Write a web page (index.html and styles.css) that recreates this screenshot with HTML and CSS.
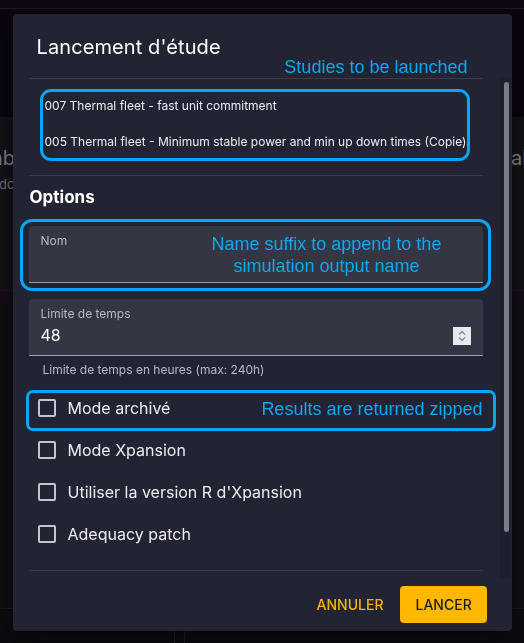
FILE: index.html
```html
<!DOCTYPE html>
<html lang="fr">
<head>
<meta charset="utf-8">
<title>Lancement d'étude</title>
<link rel="stylesheet" href="styles.css">
</head>
<body>
<div class="app">
  <div class="topbar"></div>
  <div class="hero"></div>
  <div class="card">
    <div class="card-left">
      <div class="card-title">nb</div>
      <div class="card-sub">dc</div>
    </div>
    <div class="card-right">
      <div class="card-title">ab</div>
    </div>
  </div>
  <div class="strip"></div>
  <div class="main"></div>
  <div class="footer">
    <div class="footer-cell"></div>
    <div class="footer-sep"></div>
    <div class="footer-cell"></div>
  </div>
</div>

<div class="overlay">
  <div class="dialog">
    <div class="dlg-title">
      <h2 class="title">Lancement d'étude</h2>
      <span class="note note-studies">Studies to be launched</span>
    </div>
    <div class="dlg-body">
      <div class="content">
        <hr class="divider">
        <ul class="study-list">
          <li>007 Thermal fleet - fast unit commitment</li>
          <li>005 Thermal fleet - Minimum stable power and min up down times (Copie)</li>
        </ul>
        <hr class="divider divider-gap">
        <h3 class="section">Options</h3>

        <div class="field field-name">
          <span class="field-label">Nom</span>
          <span class="name-frame"></span>
          <span class="note note-name">Name suffix to append to the<br>simulation output name</span>
        </div>

        <div class="field field-time">
          <span class="field-label">Limite de temps</span>
          <span class="field-value">48</span>
          <span class="spinner">
            <svg width="10" height="14" viewBox="0 0 10 14" aria-hidden="true">
              <path d="M2 5.5 L5 2.5 L8 5.5" fill="none" stroke="#8a8a92" stroke-width="1.3"/>
              <path d="M2 8.5 L5 11.5 L8 8.5" fill="none" stroke="#8a8a92" stroke-width="1.3"/>
            </svg>
          </span>
        </div>
        <p class="helper">Limite de temps en heures (max: 240h)</p>

        <div class="checks">
          <label class="check-row check-archive">
            <span class="box"></span>
            <span class="check-label">Mode archivé</span>
            <span class="archive-frame"></span>
            <span class="note note-zip">Results are returned zipped</span>
          </label>
          <label class="check-row">
            <span class="box"></span>
            <span class="check-label">Mode Xpansion</span>
          </label>
          <label class="check-row">
            <span class="box"></span>
            <span class="check-label">Utiliser la version R d'Xpansion</span>
          </label>
          <label class="check-row">
            <span class="box"></span>
            <span class="check-label">Adequacy patch</span>
          </label>
        </div>
        <hr class="divider divider-end">
      </div>
      <div class="scroll-track"><div class="scroll-thumb"></div></div>
    </div>
    <div class="dlg-actions">
      <button class="btn btn-text">Annuler</button>
      <button class="btn btn-primary">Lancer</button>
    </div>
  </div>
</div>
</body>
</html>
```
FILE: styles.css
```css
* { box-sizing: border-box; }

html, body {
  margin: 0;
  padding: 0;
  height: 100%;
}

body {
  background: #0c0a10;
  font-family: Inter, "Noto Sans", "DejaVu Sans", sans-serif;
  color: #ffffff;
  overflow: hidden;
}

/* ---------- app behind the dialog ---------- */
.app {
  display: flex;
  flex-direction: column;
  height: 643px;
}
.topbar {
  height: 9px;
  background: #0d0811;
  border-bottom: 1px solid #1f1a24;
}
.hero {
  height: 108px;
  background: #0a0510;
}
.card {
  height: 173px;
  background: #121217;
  display: flex;
  justify-content: space-between;
  padding-top: 29px;
}
.card-title {
  font-size: 20px;
  line-height: 24px;
  color: #7d7d86;
}
.card-sub {
  font-size: 13px;
  line-height: 20px;
  margin-top: 4px;
  margin-left: 8px;
  color: #6e6e77;
}
.card-left {
  margin-left: -9px;
  white-space: nowrap;
}
.card-right {
  width: 13px;
  white-space: nowrap;
}
.strip {
  height: 10px;
  background: #150c18;
  border-top: 1px solid #1b1620;
}
.main {
  flex: 1;
  background: #0f0f14;
}
.footer {
  height: 35px;
  display: flex;
  border-top: 1px solid #1c1b22;
  background: #0c0c10;
}
.footer-cell { flex: 0 0 174px; }
.footer-sep {
  width: 11px;
  border-left: 1px solid #1c1b22;
  border-right: 1px solid #1c1b22;
}

/* ---------- dialog ---------- */
.overlay {
  position: fixed;
  inset: 0;
  display: flex;
  align-items: flex-start;
  justify-content: center;
  padding-top: 14px;
}
.dialog {
  width: 499px;
  height: 617px;
  background: #232433;
  border-radius: 4px;
  display: flex;
  flex-direction: column;
  box-shadow: 0 10px 30px rgba(0,0,0,0.4);
}

.dlg-title {
  position: relative;
  height: 64px;
  padding: 17px 24px 15px;
}
.title {
  margin: 0;
  font-size: 20px;
  line-height: 32px;
  font-weight: 400;
  letter-spacing: 0.1px;
}

.note {
  color: #0ba7f0;
  font-family: "Liberation Sans", Arial, sans-serif;
  font-size: 18px;
  line-height: 22px;
}
.note-studies {
  position: absolute;
  right: 44px;
  bottom: 0;
}

.dlg-body {
  height: 500px;
  display: flex;
  overflow: hidden;
}
.content {
  width: 454px;
  margin-left: 16px;
  margin-right: 17px;
}
.divider {
  margin: 0;
  border: 0;
  border-top: 1px solid #3a3b49;
}
.divider-gap { margin-top: 14px; }
.divider-end { margin-top: 15px; }

.study-list {
  list-style: none;
  margin: 10px 13px 0 11px;
  padding: 5px 2px 7px;
  border: 3px solid #07a6f0;
  border-radius: 11px;
  display: flex;
  flex-direction: column;
  gap: 18px;
}
.study-list li {
  font-size: 12px;
  line-height: 18px;
  color: #ececf0;
  white-space: nowrap;
}

.section {
  margin: 9px 0 0 1px;
  font-size: 17px;
  line-height: 24px;
  font-weight: 700;
}

.field {
  position: relative;
  height: 57px;
  background: #353643;
  border-radius: 4px 4px 0 0;
  border-bottom: 1px solid #9b9ba6;
}
.field-name {
  margin-top: 17px;
}
.name-frame {
  position: absolute;
  left: -9px;
  top: -7px;
  width: 471px;
  height: 72px;
  border: 3px solid #07a6f0;
  border-radius: 12px;
}
.field-time {
  margin-top: 16px;
}
.field-label {
  position: absolute;
  left: 12px;
  top: 7px;
  font-size: 12px;
  line-height: 16px;
  color: #b8b8c2;
}
.field-value {
  position: absolute;
  left: 12px;
  top: 25px;
  font-size: 16px;
  line-height: 23px;
  color: #ffffff;
}
.spinner {
  position: absolute;
  right: 12px;
  top: 28px;
  width: 18px;
  height: 18px;
  background: #e8e8ee;
  display: flex;
  align-items: center;
  justify-content: center;
}
.note-name {
  position: absolute;
  left: 164px;
  width: 268px;
  top: 7px;
  text-align: center;
}

.helper {
  margin: 6px 0 0 14px;
  font-size: 12px;
  line-height: 16px;
  color: #b9b9c3;
}

.checks {
  margin-top: 9px;
  display: flex;
  flex-direction: column;
}
.check-row {
  position: relative;
  height: 42px;
  display: flex;
  align-items: center;
  padding-left: 9px;
}
.box {
  width: 18px;
  height: 18px;
  border: 2px solid #c4c4ca;
  border-radius: 2px;
  flex: none;
}
.check-label {
  margin-left: 12px;
  font-size: 16px;
  line-height: 24px;
  color: #ececf0;
}
.archive-frame {
  position: absolute;
  left: -3px;
  top: 3px;
  width: 470px;
  height: 41px;
  border: 3px solid #07a6f0;
  border-radius: 7px;
}
.note-zip {
  position: absolute;
  right: 0;
  top: 11px;
}

.scroll-track {
  width: 11px;
  background: #1f202e;
  padding: 4px 2px 0 4px;
}
.scroll-thumb {
  height: 450px;
  background: #7c7c86;
  border-radius: 3px;
}

.dlg-actions {
  flex: 1;
  display: flex;
  justify-content: flex-end;
  align-items: flex-start;
  padding: 8px 25px 0 0;
  gap: 8px;
}
.btn {
  font-family: Inter, "Noto Sans", sans-serif;
  font-size: 14px;
  font-weight: 500;
  text-transform: uppercase;
  letter-spacing: 0;
  height: 37px;
  border: 0;
  border-radius: 4px;
  padding: 0 16px;
  cursor: pointer;
}
.btn-text {
  background: transparent;
  color: #f6b400;
  padding: 0 8px;
}
.btn-primary {
  background: #ffb800;
  color: #1c1c1c;
  width: 87px;
}
```
